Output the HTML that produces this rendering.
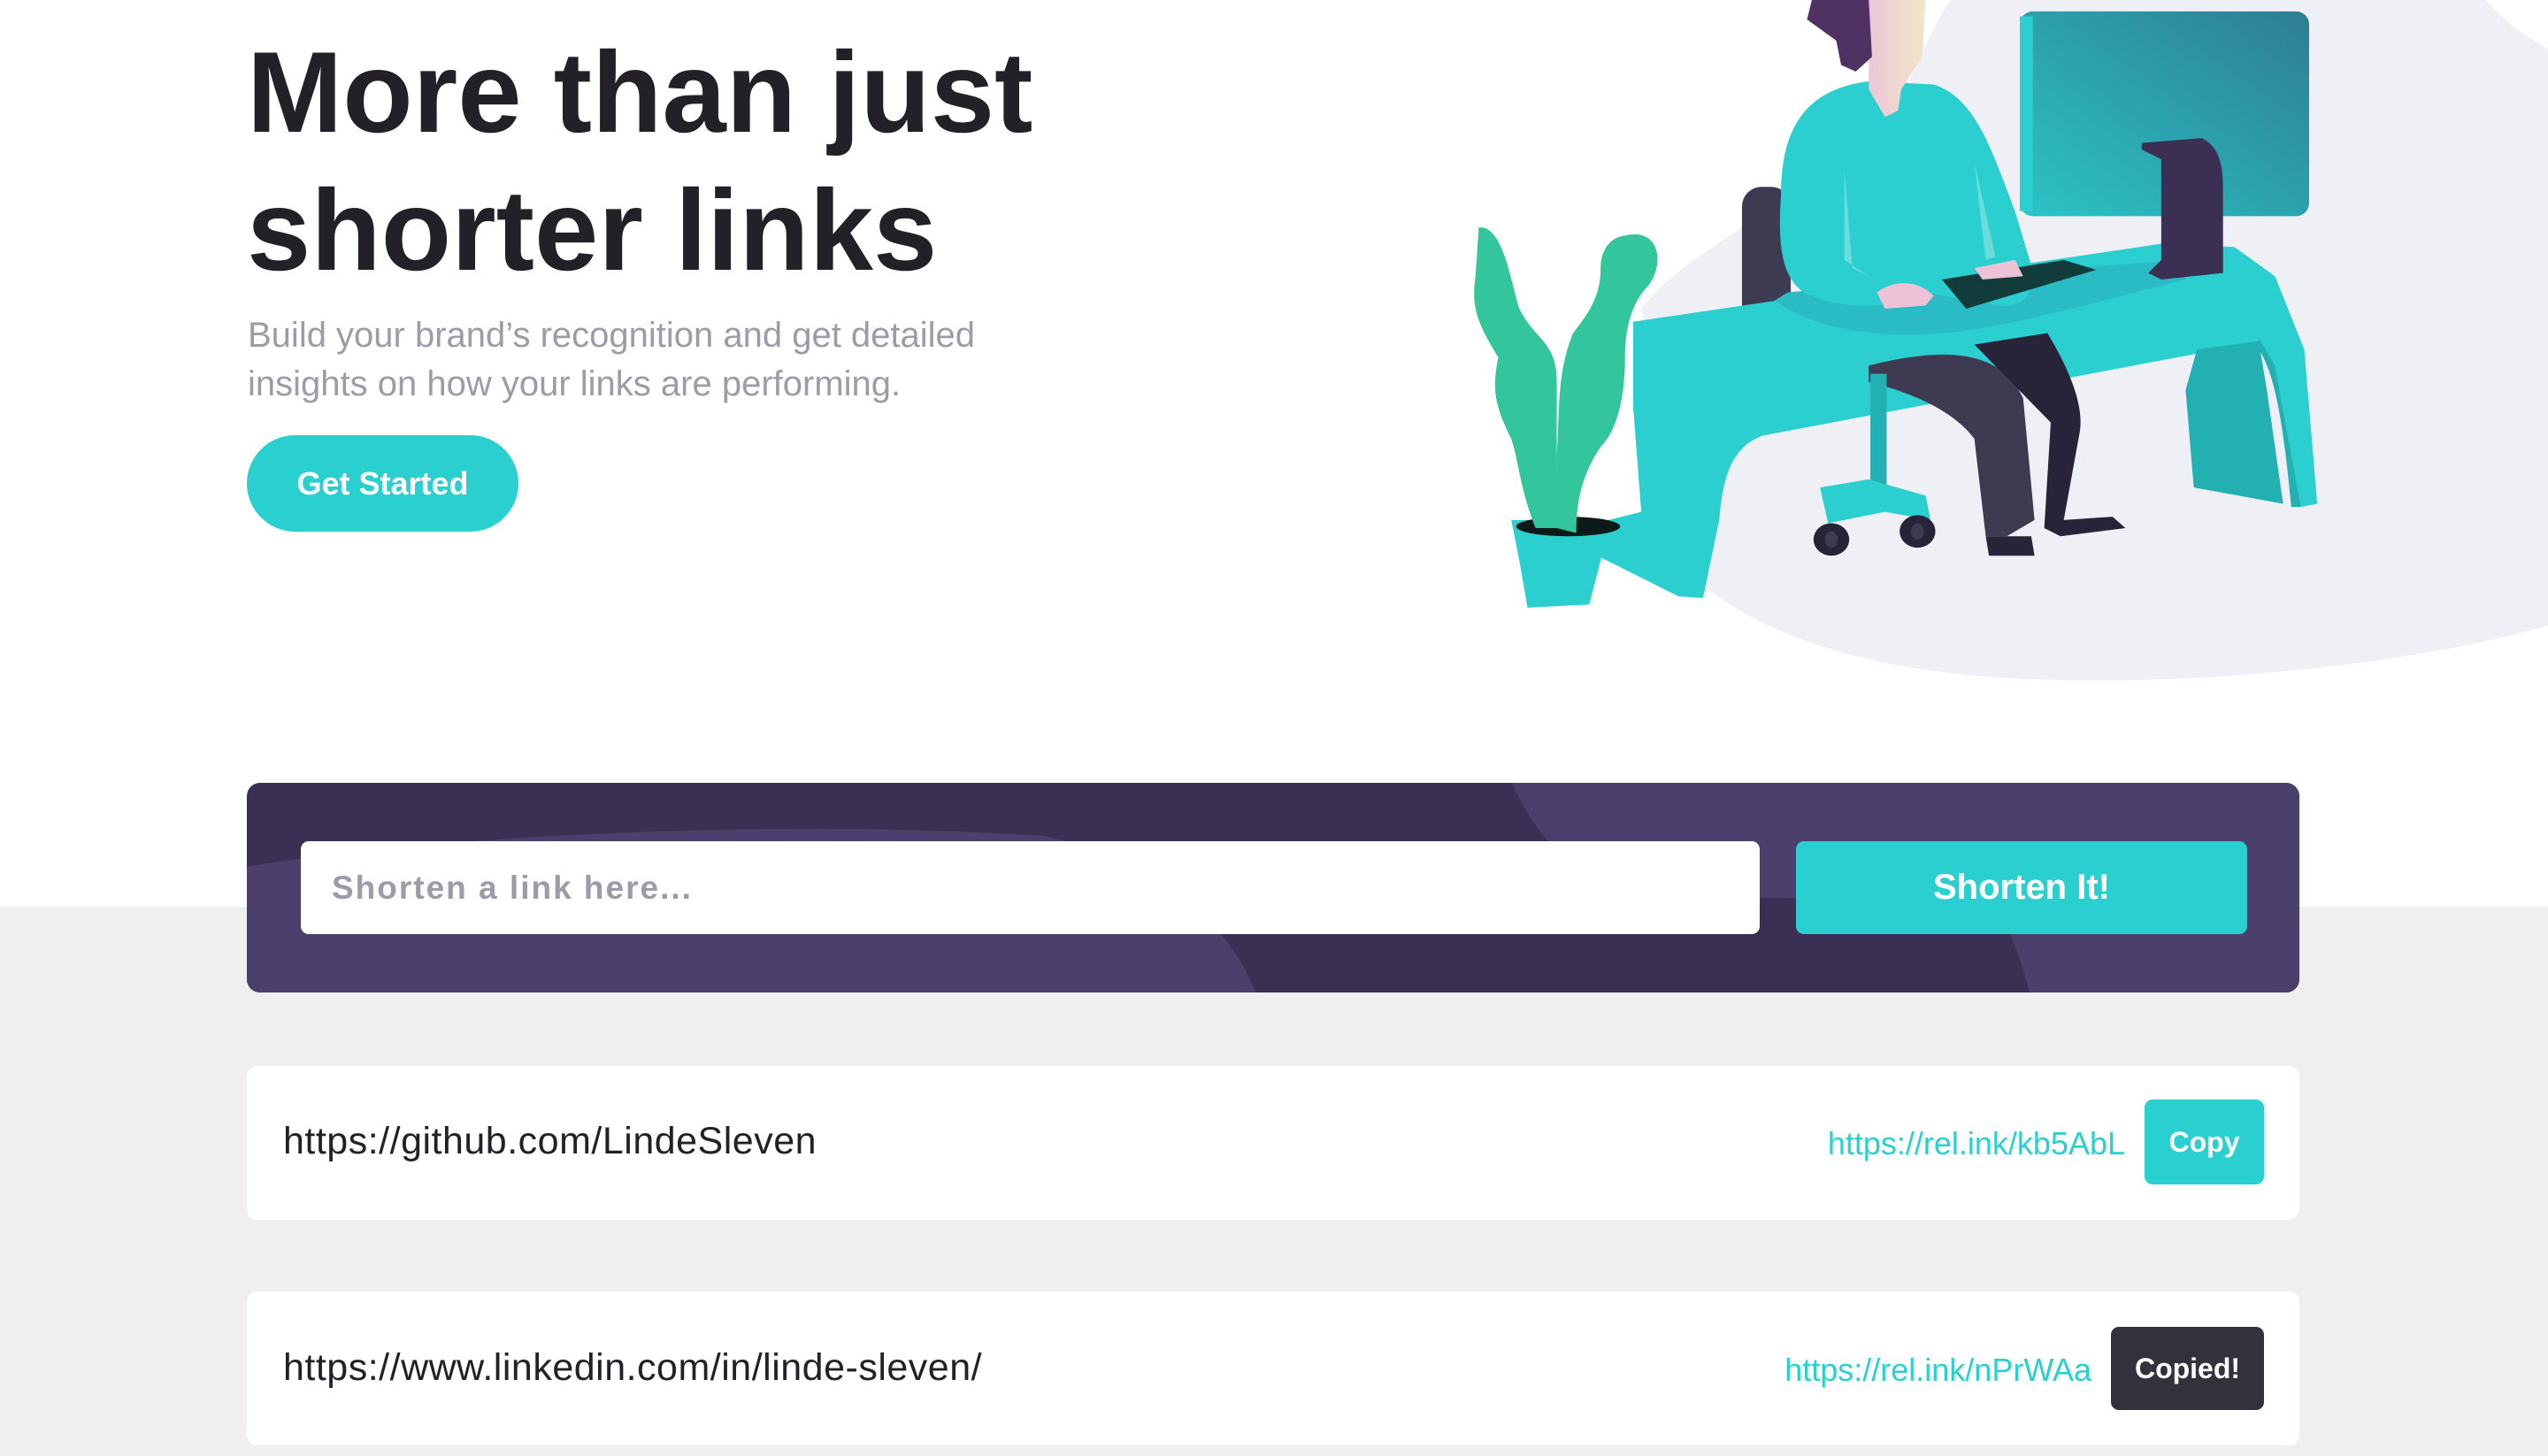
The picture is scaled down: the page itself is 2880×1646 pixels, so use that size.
<!DOCTYPE html>
<html><head><meta charset="utf-8"><style>
*{margin:0;padding:0;box-sizing:border-box}
body{width:2880px;height:1646px;overflow:hidden;background:#fff;font-family:"Liberation Sans",sans-serif;position:relative}
.gray{position:absolute;left:0;top:1025px;width:2880px;height:621px;background:#f0efed}
svg.ill{position:absolute;left:0;top:0;width:2880px;height:1646px}
h1{position:absolute;left:279px;top:26px;font-size:130px;line-height:156px;font-weight:700;color:#232127;letter-spacing:0}
p.sub{position:absolute;left:280px;top:352px;font-size:40px;line-height:55px;color:#9e9aa7;width:1000px}
.gs{position:absolute;left:279px;top:492px;width:307px;height:109px;border-radius:55px;background:#2acfcf;color:#fff;font-size:36px;font-weight:700;display:flex;align-items:center;justify-content:center}
.box{position:absolute;left:279px;top:885px;width:2320px;height:237px;border-radius:15px;background:#3b3054;overflow:hidden}
.inp{position:absolute;left:340px;top:951px;width:1649px;height:105px;background:#fff;border-radius:9px;font-size:37px;font-weight:700;color:#9e9aa7;letter-spacing:2px;padding-left:35px;line-height:105px}
.btn{position:absolute;left:2030px;top:951px;width:510px;height:105px;background:#2acfcf;border-radius:9px;color:#fff;font-size:40px;font-weight:700;text-align:center;line-height:105px}
.card{position:absolute;left:279px;width:2320px;height:174px;background:#fff;border-radius:12px}
.long{position:absolute;left:320px;font-size:43px;color:#232127;letter-spacing:0.5px}
.short{position:absolute;font-size:36px;color:#2acfcf}
.cb{position:absolute;color:#fff;font-weight:700;font-size:32px;border-radius:9px;display:flex;align-items:center;justify-content:center}
</style></head><body>
<div class="gray"></div>
<svg class="ill" viewBox="0 0 1568 896" preserveAspectRatio="none">
<defs>
<linearGradient id="mon" x1="0" y1="1" x2="1" y2="0"><stop offset="0" stop-color="#2bc4c6"/><stop offset="1" stop-color="#2e7d93"/></linearGradient>
<linearGradient id="face" x1="0" x2="1"><stop offset="0" stop-color="#ecc7d8"/><stop offset="1" stop-color="#f2e6c7"/></linearGradient>
</defs>
<path d="M1200,0 L1568,0 L1568,385 C1480,410 1350,422 1250,418 C1150,414 1090,392 1050,362 L1010,190 C1040,150 1120,120 1165,70 C1180,40 1190,15 1200,0 Z" fill="#eff0f5"/>
<path d="M1530,0 L1568,0 L1568,30 C1550,20 1538,10 1530,0Z" fill="#fff"/>
<rect x="1243" y="7" width="178" height="126" rx="8" fill="url(#mon)"/>
<rect x="1243" y="10" width="8" height="120" fill="#2acfcf"/>
<rect x="1072" y="115" width="30" height="95" rx="12" fill="#3e3a52"/>
<path d="M1005,198 L1330,150 L1375,152 L1400,170 L1418,215 L1426,310 L1416,312 L1400,225 L1390,210 L1350,218 L1085,268 C1065,275 1060,295 1058,320 L1048,368 L1033,367 L985,343 L990,320 L1010,315 L1005,250 Z" fill="#2ccfcf"/>
<path d="M1390,208 L1400,225 L1416,312 L1410,312 C1405,260 1400,230 1390,215 Z M1352,215 L1390,210 L1395,240 L1405,310 L1350,300 L1345,240 Z" fill="#22b0b2"/>
<path d="M1092,185 C1120,205 1170,212 1230,200 C1280,190 1320,178 1345,172 L1345,160 L1200,170 L1100,180 Z" fill="#29bcc4"/>
<path d="M1096,120 C1096,80 1110,55 1150,50 L1190,52 C1215,60 1225,90 1240,130 L1252,170 C1250,185 1240,190 1230,188 L1185,180 C1160,192 1130,190 1110,180 C1096,170 1094,150 1096,120 Z" fill="#2ccfcf"/>
<path d="M1135,105 L1140,165 L1150,170 L1135,160 Z M1215,100 L1222,160 L1228,158 Z" fill="#6bdcdc"/>
<path d="M1150,0 L1185,0 L1183,35 L1170,55 L1168,68 L1160,72 L1150,55 Z" fill="url(#face)"/>
<path d="M1115,0 L1150,0 L1152,35 L1142,44 L1133,40 L1130,25 L1112,12 Z" fill="#4f3163"/>
<path d="M1195,172 L1270,160 L1290,166 L1210,190 Z" fill="#123c3c"/>
<path d="M1155,180 C1165,172 1180,172 1190,182 L1185,188 L1160,190 Z M1215,165 L1240,160 L1245,170 L1220,172 Z" fill="#edc2d6"/>
<path d="M1150,225 C1190,215 1230,212 1245,245 L1252,320 L1235,330 L1222,330 L1215,270 C1200,250 1170,240 1150,235 Z" fill="#3e3a52"/>
<path d="M1215,212 L1260,205 C1275,230 1282,250 1280,265 L1270,320 L1300,318 L1308,325 L1268,330 L1258,325 L1262,260 Z" fill="#27243a"/>
<path d="M1222,330 L1250,330 L1252,342 L1224,342 Z" fill="#27243a"/>
<rect x="1151" y="230" width="10" height="80" fill="#22b0b2"/>
<path d="M1120,300 L1150,295 L1185,305 L1188,320 L1160,315 L1125,322 Z" fill="#2ccfcf"/>
<ellipse cx="1127" cy="332" rx="11" ry="10" fill="#27243a"/>
<ellipse cx="1180" cy="327" rx="11" ry="10" fill="#27243a"/>
<ellipse cx="1127" cy="332" rx="4" ry="5" fill="#3e3a52"/>
<ellipse cx="1180" cy="327" rx="4" ry="5" fill="#3e3a52"/>
<path d="M1318,88 L1355,85 C1365,90 1368,100 1368,115 L1368,168 L1330,172 L1322,168 L1330,160 L1330,98 L1318,92 Z" fill="#3b3054"/>
<path d="M930,320 L990,320 L985,345 L978,372 L940,374 L935,345 Z" fill="#2ccfcf"/>
<ellipse cx="965" cy="324" rx="32" ry="6" fill="#0d1a1a"/>
<path d="M910,140 C925,138 930,175 935,190 C945,210 958,210 958,235 L958,290 L962,325 L945,325 C935,300 935,285 930,270 C920,250 918,240 922,220 C910,200 905,190 908,170 Z" fill="#33c59b"/>
<path d="M1000,145 C1020,140 1025,160 1015,175 C1005,185 1000,200 1000,220 C1000,245 995,265 985,275 C975,290 970,305 970,328 L958,325 L958,280 C960,250 958,230 968,205 C980,190 985,180 985,165 C985,155 990,146 1000,145 Z" fill="#33c59b"/>
</svg>
<h1>More than just<br>shorter links</h1>
<p class="sub">Build your brand’s recognition and get detailed<br>insights on how your links are performing.</p>
<div class="gs">Get Started</div>
<div class="box"><svg width="2320" height="237" viewBox="0 0 2320 237" style="position:absolute;left:0;top:0">
<path d="M1430,0 C1470,90 1530,125 1620,130 L1975,130 C2000,180 2010,220 2015,237 L2320,237 L2320,0 Z" fill="#4b3f6b"/>
<path d="M0,95 C200,60 600,40 900,60 C1050,90 1120,180 1140,237 L0,237 Z" fill="#4b3f6b"/>
</svg></div>
<div class="inp">Shorten a link here...</div>
<div class="btn">Shorten It!</div>
<div class="card" style="top:1205px"></div>
<div class="long" style="top:1266px">https://github.com/LindeSleven</div>
<div class="short" style="right:478px;top:1272px">https://rel.ink/kb5AbL</div>
<div class="cb" style="left:2424px;top:1243px;width:135px;height:96px;background:#2acfcf">Copy</div>
<div class="card" style="top:1460px"></div>
<div class="long" style="top:1522px">https://www.linkedin.com/in/linde-sleven/</div>
<div class="short" style="right:516px;top:1528px">https://rel.ink/nPrWAa</div>
<div class="cb" style="left:2386px;top:1500px;width:173px;height:94px;background:#34313d">Copied!</div>
</body></html>
